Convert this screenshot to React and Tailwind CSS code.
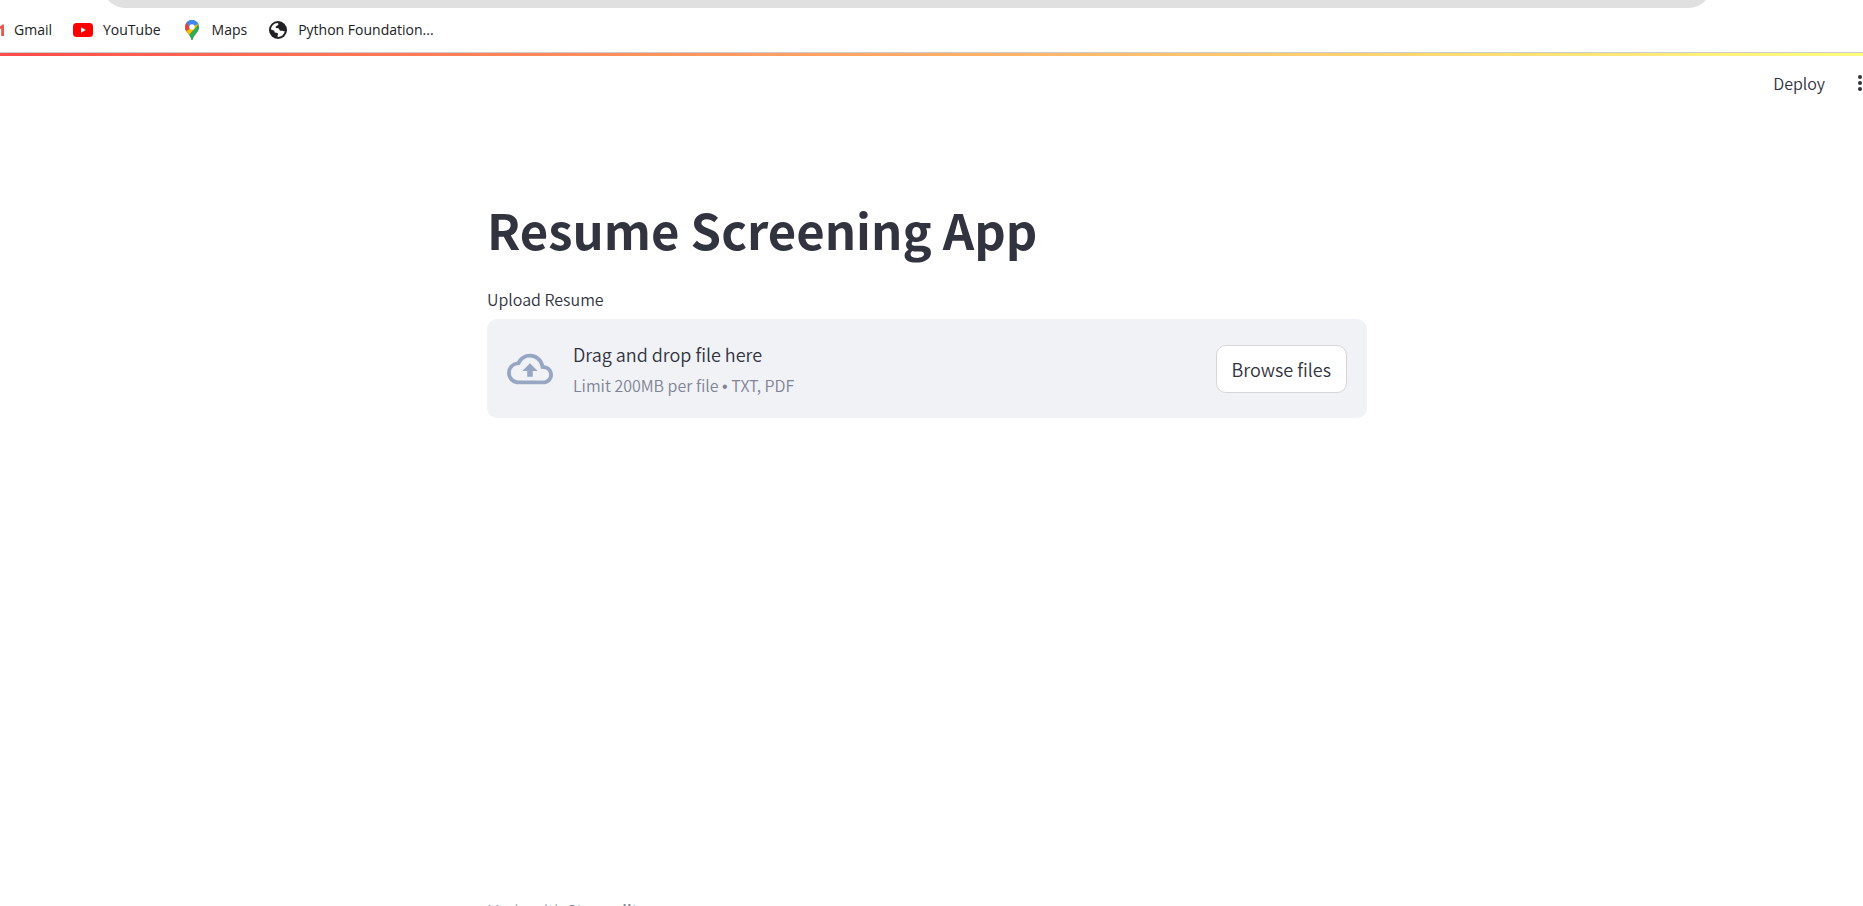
import { useRef } from "react";

function GmailIcon() {
  return (
    <svg className="h-4 w-1 shrink-0" viewBox="0 0 4 16" aria-hidden="true">
      <path d="M0 4.500 2.500 2.400Q4 2 4 3.800V14H1.200V6.300L0 7.300z" fill="#e8554b" />
    </svg>
  );
}

function YouTubeIcon() {
  return (
    <svg className="h-5 w-5 shrink-0" viewBox="0 0 20 20" aria-hidden="true">
      <rect x="0" y="3" width="20" height="14" rx="3.5" fill="#f00" />
      <path d="M8 7.300v5.400l4.800-2.700z" fill="#fff" />
    </svg>
  );
}

function MapsIcon() {
  return (
    <svg className="h-5 w-5 shrink-0" viewBox="0 0 20 20" aria-hidden="true">
      <clipPath id="pin">
        <path d="M10 0a7 7 0 0 0-7 7c0 2.6 1.1 4.200 2.600 6.100C7.500 15.500 8.800 17 9.400 19.400q.6 1.200 1.200 0C11.200 17 12.500 15.500 14.400 13.100 15.900 11.200 17 9.600 17 7a7 7 0 0 0-7-7z" />
      </clipPath>
      <g clipPath="url(#pin)">
        <rect width="20" height="20" fill="#34a853" />
        <path d="M0 20V10l4.500 1L10 7l3-3 4 0-12 13z" fill="#fbbc04" />
        <path d="M10 12.500 17 4v16H6z" fill="#34a853" />
        <path d="M0 9V0h4.600L10 6.500 4.600 11z" fill="#ea4335" />
        <path d="M4.600 2.500 6 0h11v4l-2.500.8L8 8z" fill="#4285f4" />
      </g>
      <circle cx="10" cy="7" r="2.700" fill="#fff" />
    </svg>
  );
}

function GlobeIcon() {
  return (
    <svg className="h-5 w-5 shrink-0" viewBox="0 0 20 20" aria-hidden="true">
      <circle cx="10" cy="10" r="9" fill="#202124" />
      <path
        d="M3 9.500C3.200 6 6 3.300 9.500 3.100c1.400.5 1.200 1.900-.2 2.500L7.900 6.600 7.700 8c1.600.1 3.200-.1 3.500 1.200.2 1.200 1.100 1.700 2.400 1.600 1.100-.1 1.600.4 3.200.5C16 14.700 13.300 17 10 17c-.8-.4-.6-1.800.2-2.400-.1-1.300-.9-1.900-2.200-1.900-1.500 0-1.600-1-1.600-2z"
        fill="#fff"
      />
    </svg>
  );
}

function CloudUploadIcon() {
  return (
    <svg className="size-[46px] shrink-0" viewBox="0 0 24 24" fill="#97a6c3" aria-hidden="true">
      <path d="M19.350 10.040A7.490 7.490 0 0 0 12 4C9.110 4 6.600 5.640 5.350 8.040A5.994 5.994 0 0 0 0 14c0 3.310 2.690 6 6 6h13c2.760 0 5-2.240 5-5 0-2.640-2.050-4.780-4.650-4.960zM19 18H6c-2.210 0-4-1.790-4-4 0-2.050 1.530-3.760 3.560-3.970l1.070-.11.5-.95A5.469 5.469 0 0 1 12 6c2.620 0 4.880 1.860 5.390 4.430l.3 1.500 1.530.11A2.980 2.980 0 0 1 22 15c0 1.650-1.350 3-3 3zM8 13h2.550v3h2.900v-3H16l-4-4z" />
    </svg>
  );
}

function Bookmark({ icon, children }) {
  return (
    <a href="#" className="flex items-center gap-2.5 whitespace-nowrap">
      {icon}
      {children}
    </a>
  );
}

export default function App() {
  const fileRef = useRef(null);
  return (
    <div className="flex h-screen flex-col overflow-hidden bg-white font-['Noto_Sans_CJK_SC',sans-serif] font-[350] text-[#31333f]">
      <div className="flex h-2 shrink-0 items-end overflow-hidden pr-[152px] pl-[103px]">
        <div className="h-11 flex-1 rounded-full bg-[#e0e0e0]" />
      </div>
      <nav
        aria-label="Bookmarks"
        className="flex h-[45px] shrink-0 items-center gap-[21px] border-b border-[#cccccc] pb-px font-['Open_Sans',sans-serif] text-sm font-normal text-[#202124]"
      >
        <Bookmark icon={<GmailIcon />}>Gmail</Bookmark>
        <Bookmark icon={<YouTubeIcon />}>YouTube</Bookmark>
        <Bookmark icon={<MapsIcon />}>Maps</Bookmark>
        <Bookmark icon={<GlobeIcon />}>Python Foundation...</Bookmark>
      </nav>
      <div className="h-[3px] shrink-0 bg-linear-to-r from-[#ff4b4b] to-[#fffd80]" />
      <header className="flex h-[54px] shrink-0 items-center justify-end gap-8">
        <button type="button" className="text-base">Deploy</button>
        <button type="button" aria-label="Main menu">
          <svg className="h-5 w-1.5" viewBox="0 0 6 20" fill="#31333f" aria-hidden="true">
            <circle cx="3" cy="4" r="2" />
            <circle cx="3" cy="10" r="2" />
            <circle cx="3" cy="16" r="2" />
          </svg>
        </button>
      </header>
      <div className="flex flex-1 flex-col pr-[9px]">
        <main className="mx-auto w-full max-w-[880px] flex-1 pt-[83px]">
          <h1 className="text-[49px] leading-[72px] font-bold">Resume Screening App</h1>
          <label htmlFor="resume" className="mt-[22px] block text-base leading-6">Upload Resume</label>
          <section className="mt-2 flex items-center gap-5 rounded-[10px] bg-[#f0f2f6] px-5 py-[21px]">
            <CloudUploadIcon />
            <div className="flex flex-1 flex-col gap-[5px]">
              <p className="text-lg leading-7">Drag and drop file here</p>
              <p className="text-base leading-6 text-[#808495]">
                Limit 200MB per file <span className="font-['Liberation_Sans',sans-serif] leading-none">•</span> TXT, PDF
              </p>
            </div>
            <input ref={fileRef} id="resume" type="file" accept=".txt,.pdf" className="sr-only" />
            <button
              type="button"
              onClick={() => fileRef.current.click()}
              className="h-12 rounded-[10px] border border-[#d6d6d9] bg-white px-[15px] text-lg"
            >
              Browse files
            </button>
          </section>
        </main>
        <footer className="mx-auto -mb-4 w-full max-w-[880px] shrink-0 text-base leading-6 text-[#a3a8b4]">
          Made with{" "}
          <a href="#" className="font-medium text-[#808495]">
            Streamlit
          </a>
        </footer>
      </div>
    </div>
  );
}
